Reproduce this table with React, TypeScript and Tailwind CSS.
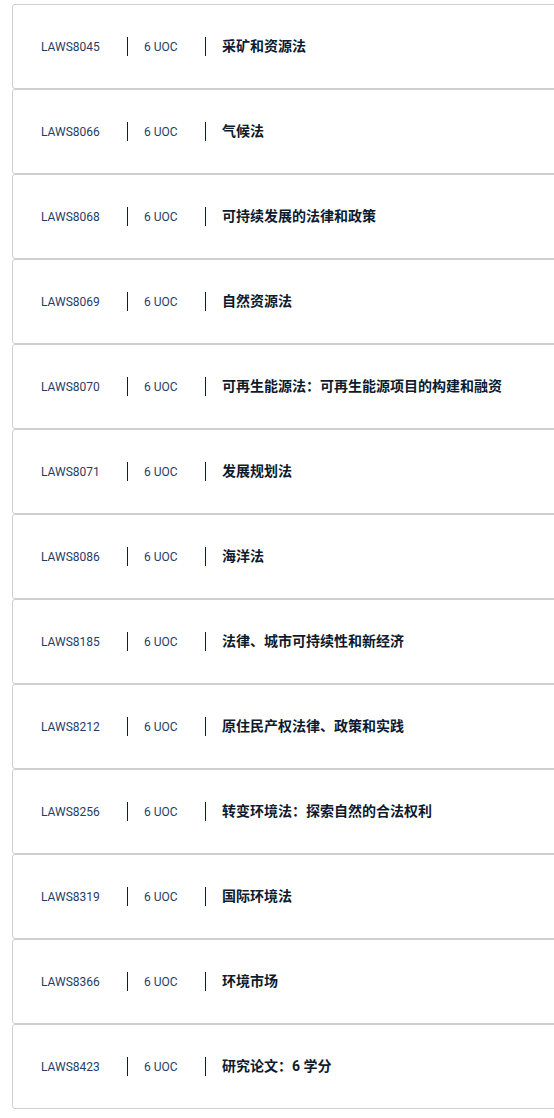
import React from 'react';

interface Course {
  code: string;
  uoc: number;
  title: string;
}

const courses: Course[] = [
  { code: 'LAWS8045', uoc: 6, title: '采矿和资源法' },
  { code: 'LAWS8066', uoc: 6, title: '气候法' },
  { code: 'LAWS8068', uoc: 6, title: '可持续发展的法律和政策' },
  { code: 'LAWS8069', uoc: 6, title: '自然资源法' },
  { code: 'LAWS8070', uoc: 6, title: '可再生能源法：可再生能源项目的构建和融资' },
  { code: 'LAWS8071', uoc: 6, title: '发展规划法' },
  { code: 'LAWS8086', uoc: 6, title: '海洋法' },
  { code: 'LAWS8185', uoc: 6, title: '法律、城市可持续性和新经济' },
  { code: 'LAWS8212', uoc: 6, title: '原住民产权法律、政策和实践' },
  { code: 'LAWS8256', uoc: 6, title: '转变环境法：探索自然的合法权利' },
  { code: 'LAWS8319', uoc: 6, title: '国际环境法' },
  { code: 'LAWS8366', uoc: 6, title: '环境市场' },
  { code: 'LAWS8423', uoc: 6, title: '研究论文：6 学分' },
];

function CourseCard({ course }: { course: Course }) {
  return (
    <li className="-mr-6 flex h-[85px] items-center rounded-[3px] border border-[#cfcfcf] bg-white pl-7">
      <span className="w-[86px] text-[12px] text-[#1f3d66]">{course.code}</span>
      <span className="h-[19px] w-px bg-[#0b1e3f]" />
      <span className="w-[77px] pl-4 text-[12px] text-[#1f3d66]">{course.uoc} UOC</span>
      <span className="h-[19px] w-px bg-[#0b1e3f]" />
      <span className="pl-4 text-[14px] font-bold text-[#0e1a2e]">{course.title}</span>
    </li>
  );
}

export default function App() {
  return (
    <div
      className="min-h-screen overflow-hidden bg-white pt-1 pl-3"
      style={{ fontFamily: 'Roboto, "Noto Sans CJK SC", sans-serif' }}
    >
      <ul className="flex flex-col">
        {courses.map((c) => (
          <CourseCard key={c.code} course={c} />
        ))}
      </ul>
    </div>
  );
}
